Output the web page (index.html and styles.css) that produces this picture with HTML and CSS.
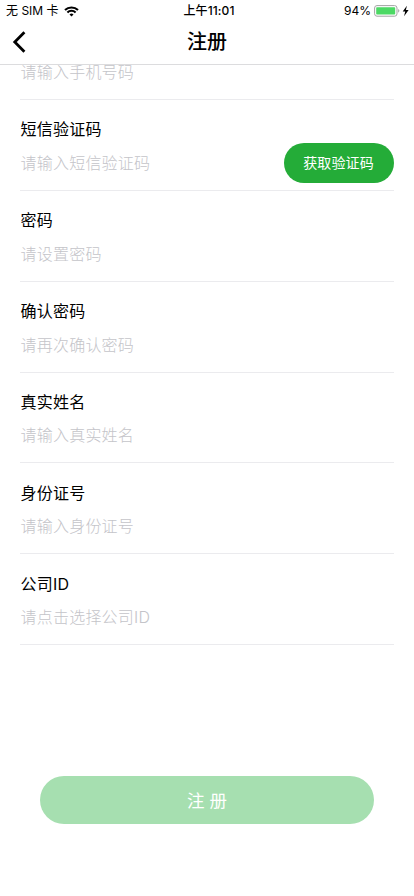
FILE: index.html
```html
<!DOCTYPE html>
<html lang="zh-CN">
<head>
<meta charset="utf-8">
<title>注册</title>
<link rel="stylesheet" href="styles.css">
</head>
<body>
<header class="header">
  <div class="status">
    <div class="carrier"><span>无 SIM 卡</span>
      <svg width="15" height="11" viewBox="0 0 15 11" fill="none" stroke="#000" stroke-width="2.1"><path d="M1 4.1a9.3 9.3 0 0 1 13 0M3.4 6.5a5.8 5.8 0 0 1 8.2 0"/><path d="M7.5 10.5 5.5 8.4a2.8 2.8 0 0 1 4 0z" fill="#000" stroke="none"/></svg>
    </div>
    <div class="time">上午11:01</div>
    <div class="power"><span>94%</span>
      <svg width="36" height="12" viewBox="0 0 36 12"><rect x=".6" y=".6" width="22.4" height="10.6" rx="2.4" fill="#fff" stroke="#a3a3a3"/><rect x="2.2" y="2.2" width="19" height="7.4" rx=".8" fill="#4cd964"/><path d="M24.2 4.1c1.6.6 1.6 3 0 3.6z" fill="#a3a3a3"/><path d="M32.9.8 28.7 6.6h2.5l-1.1 4.6 4.5-6.1h-2.7z"/></svg>
    </div>
  </div>
  <div class="nav">
    <svg class="back" width="14" height="22" viewBox="0 0 14 22" fill="none" stroke="#000" stroke-width="2.8"><path d="M12.4 1.3 2.8 11l9.6 9.7"/></svg>
    <h1 class="title">注册</h1>
  </div>
</header>
<main class="content">
  <form class="form">
    <div class="field first"><div class="hint">请输入手机号码</div></div>
    <div class="field"><div class="label">短信验证码</div><div class="hint">请输入短信验证码</div><button type="button" class="code">获取验证码</button></div>
    <div class="field"><div class="label">密码</div><div class="hint">请设置密码</div></div>
    <div class="field"><div class="label">确认密码</div><div class="hint">请再次确认密码</div></div>
    <div class="field"><div class="label">真实姓名</div><div class="hint">请输入真实姓名</div></div>
    <div class="field"><div class="label">身份证号</div><div class="hint">请输入身份证号</div></div>
    <div class="field"><div class="label">公司ID</div><div class="hint">请点击选择公司ID</div></div>
  </form>
  <button type="button" class="submit">注 册</button>
</main>
</body>
</html>
```
FILE: styles.css
```css
* { box-sizing: border-box; }
body {
  margin: 0;
  height: 896px;
  overflow: hidden;
  display: flex;
  flex-direction: column;
  background: #fff;
  color: #000;
  font-family: Inter, "Noto Sans CJK SC", sans-serif;
}
button { border: 0; font-family: inherit; color: #fff; }
.header { flex: none; height: 65px; border-bottom: 1px solid #dcdcde; }
.status {
  height: 20px;
  padding: 1px 4px 0 6px;
  display: grid;
  grid-template-columns: 1fr auto 1fr;
  align-items: center;
  font-size: 12px;
  line-height: 20px;
}
.carrier, .power { display: flex; align-items: center; }
.carrier { gap: 5px; }
.power { justify-content: flex-end; gap: 3px; }
.time { font-weight: 500; letter-spacing: .1px; padding-left: 2px; }
.nav {
  height: 44px;
  padding: 0 12px;
  display: grid;
  grid-template-columns: 1fr auto 1fr;
  align-items: center;
}
.title { margin: 0; font-size: 20px; font-weight: 500; line-height: 30px; }
.content { flex: 1; overflow: hidden; }
.form { margin: 0 20px; }
.field {
  height: 90.9px;
  padding: 16.4px 0 0 .5px;
  border-bottom: 1px solid #ebebee;
  display: grid;
  grid-template-columns: 1fr auto;
  grid-template-rows: 26px 41px;
  align-items: center;
  font-size: 16px;
  letter-spacing: .22px;
}
.first {
  height: 34.9px;
  padding-top: 0;
  grid-template-rows: 14px;
}
.label { grid-column: 1 / -1; line-height: 24px; }
.hint { color: #c4c4c9; line-height: 24px; font-weight: 300; }
.code {
  width: 110px;
  height: 40px;
  padding: 0 1px 1px 0;
  border-radius: 20px;
  background: #24ac38;
  font-size: 14px;
  letter-spacing: .15px;
}
.submit {
  display: block;
  width: 334px;
  height: 48px;
  margin: 131.2px auto 0;
  padding: 0 0 2px;
  border-radius: 24px;
  background: #a6dfb0;
  font-size: 17.5px;
}
```
